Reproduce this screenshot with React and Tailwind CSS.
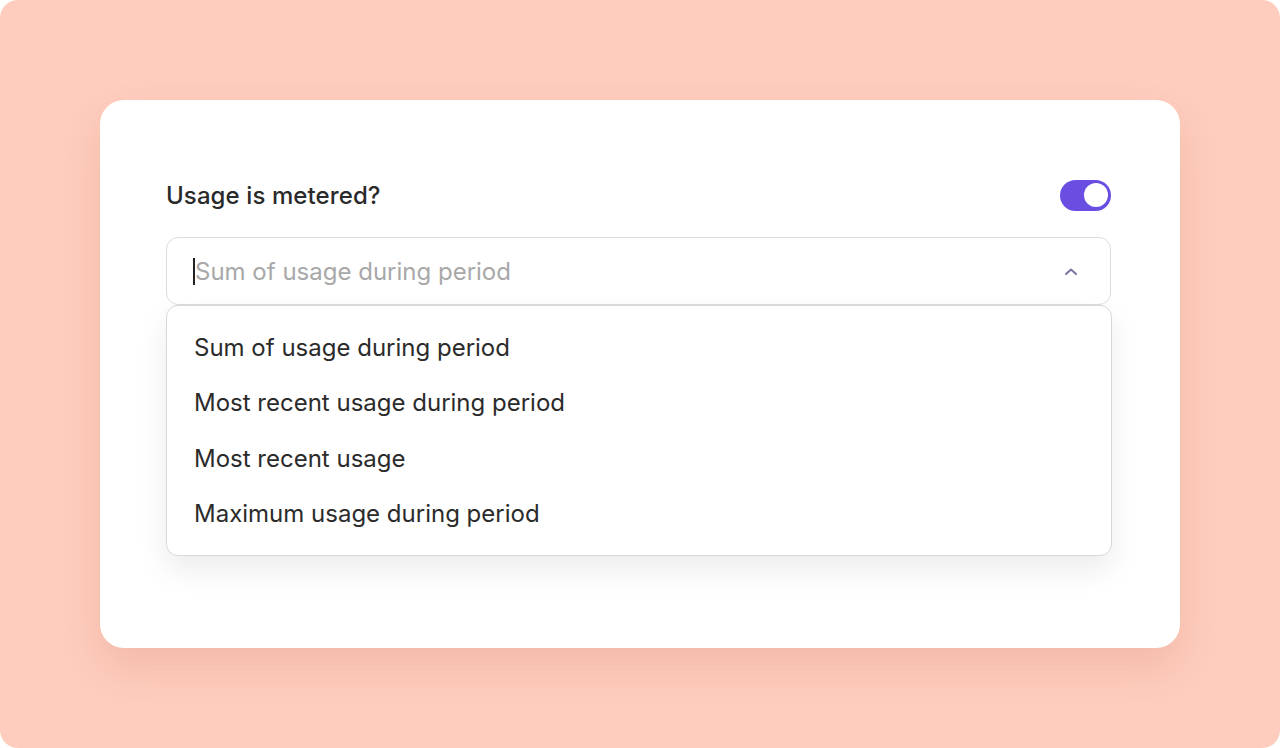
import React, { useState } from 'react';

const options = [
  'Sum of usage during period',
  'Most recent usage during period',
  'Most recent usage',
  'Maximum usage during period',
];

const App = () => {
  const [metered, setMetered] = useState(true);

  return (
    <div className="bg-white w-[1280px] h-[748px]">
      <div
        className="w-full h-full bg-[#fecdbd] rounded-[18px] p-[100px]"
        style={{ fontFamily: 'Inter, "Noto Sans", sans-serif' }}
      >
        <div className="h-[548px] bg-white rounded-[24px] shadow-[0_20px_40px_rgba(180,90,70,0.16)] pl-[66px] pr-[69px] pt-[78px]">
          {/* Cabeçalho */}
          <div className="flex items-center justify-between h-[34px]">
            <span className="text-[24px] font-medium text-[#2a2a2a] tracking-[0.1px] pt-[2px]">Usage is metered?</span>
            <button
              onClick={() => setMetered(!metered)}
              className={`w-[51px] h-[31px] rounded-full p-[3.5px] flex ${metered ? 'bg-[#6a4ee2] justify-end' : 'bg-[#d4d4d8] justify-start'}`}
            >
              <span className="w-[24px] h-[24px] rounded-full bg-white block" />
            </button>
          </div>

          {/* Select */}
          <div className="relative mt-[25px]">
            <div className="h-[68px] border border-[#dcdcdc] rounded-[12px] flex items-center pl-[26px] pr-[32px]">
              <span className="w-[1.5px] h-[27px] bg-[#222] mr-[0.5px]" />
              <span className="flex-1 text-[24px] text-[#a8a8a8] pt-[2px]">Sum of usage during period</span>
              <svg width="14" height="9" viewBox="0 0 14 9" fill="none">
                <path d="M2 7 L7 2.5 L12 7" stroke="#7c74a0" strokeWidth="2" strokeLinecap="round" strokeLinejoin="round" />
              </svg>
            </div>

            {/* Menu */}
            <div className="absolute left-0 right-[-1px] top-[68px] bg-white border border-[#d8d8d8] rounded-[12px] shadow-[0_14px_30px_rgba(0,0,0,0.08)] pt-[14px] pb-[13px]">
              {options.map((opt) => (
                <div key={opt} className="h-[55.5px] flex items-center px-[27px] text-[24px] text-[#2b2b2b]">
                  {opt}
                </div>
              ))}
            </div>
          </div>
        </div>
      </div>
    </div>
  );
};

export default App;
